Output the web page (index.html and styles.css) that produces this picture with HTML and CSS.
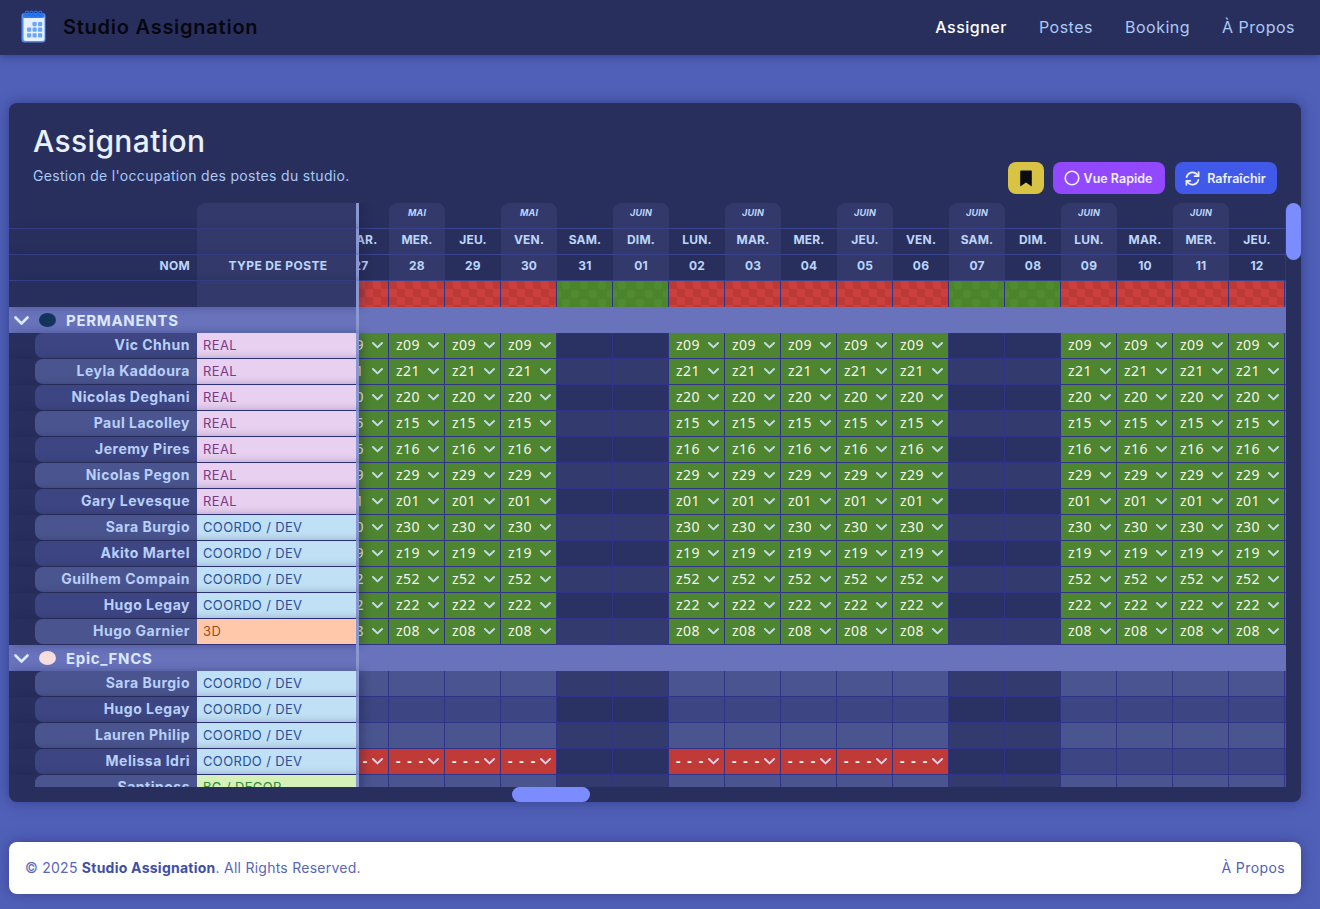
FILE: index.html
```html
<!doctype html>
<html lang="fr">
<head>
    <meta charset="UTF-8">
    <title>Studio Assignation</title>
    <link rel="stylesheet" href="styles.css">
</head>
<body>
    <nav class="topbar">
        <a class="brand" href="#">
            <svg class="brand-logo" width="28" height="34" viewBox="0 0 28 34">
                <rect x="1.5" y="3" width="24" height="29.5" rx="3" fill="#4f8ff5"/>
                <rect x="3.5" y="6" width="21" height="25" rx="2" fill="#e6f0fd"/>
                <rect x="3" y="3" width="21" height="5" rx="1.5" fill="#2f7df0"/>
                <g fill="none" stroke="#1f6fe8" stroke-width="1.4">
                    <ellipse cx="7" cy="3.5" rx="1.7" ry="2.4"/>
                    <ellipse cx="11.4" cy="3.5" rx="1.7" ry="2.4"/>
                    <ellipse cx="15.8" cy="3.5" rx="1.7" ry="2.4"/>
                    <ellipse cx="20.2" cy="3.5" rx="1.7" ry="2.4"/>
                </g>
                <g fill="#6aa6f5">
                    <rect x="12.5" y="12" width="4.2" height="4.2" rx=".8"/>
                    <rect x="18" y="12" width="4.2" height="4.2" rx=".8"/>
                    <rect x="7" y="17.6" width="4.2" height="4.2" rx=".8"/>
                    <rect x="12.5" y="17.6" width="4.2" height="4.2" rx=".8"/>
                    <rect x="18" y="17.6" width="4.2" height="4.2" rx=".8"/>
                    <rect x="7" y="23.2" width="4.2" height="4.2" rx=".8"/>
                    <rect x="12.5" y="23.2" width="4.2" height="4.2" rx=".8"/>
                    <rect x="18" y="23.2" width="4.2" height="4.2" rx=".8"/>
                </g>
            </svg>
            <span class="brand-name">Studio Assignation</span>
        </a>
        <ul class="menu">
            <li><a class="active" href="#">Assigner</a></li>
            <li><a href="#">Postes</a></li>
            <li><a href="#">Booking</a></li>
            <li><a href="#">À Propos</a></li>
        </ul>
    </nav>

    <main class="page">
        <section class="card">
            <header class="card-head">
                <div class="card-title">
                    <h1>Assignation</h1>
                    <p>Gestion de l'occupation des postes du studio.</p>
                </div>
                <div class="actions">
                    <button class="btn btn-mark" type="button">
                        <svg width="12" height="17" viewBox="0 0 12 17"><path d="M1 0.5h10a.8.8 0 0 1 .8.8V16.5L6 12.6 .2 16.5V1.3A.8.8 0 0 1 1 .5z" fill="#0b0b12"/></svg>
                    </button>
                    <button class="btn btn-quick" type="button">
                        <svg width="16" height="16" viewBox="0 0 16 16"><circle cx="8" cy="8" r="6.8" fill="none" stroke="#eef0ff" stroke-width="1.6"/></svg>
                        Vue Rapide
                    </button>
                    <button class="btn btn-refresh" type="button">
                        <svg width="15" height="15" viewBox="0 0 15 15" fill="none" stroke="#eef2ff" stroke-width="1.7" stroke-linecap="round" stroke-linejoin="round">
                            <path d="M1.6 6.2A6 6 0 0 1 11.8 3.2L13.4 5"/>
                            <path d="M13.6 1.2V5.2H9.6"/>
                            <path d="M13.4 8.8A6 6 0 0 1 3.2 11.8L1.6 10"/>
                            <path d="M1.4 13.8V9.8H5.4"/>
                        </svg>
                        Rafraîchir
                    </button>
                </div>
            </header>

            <div class="board">
                <div class="viewport" id="grid"></div>
                <div class="vtrack"><div class="vthumb"></div></div>
            </div>
            <div class="htrack"><div class="hthumb"></div></div>
        </section>
    </main>

    <footer class="footer">
        <span>© 2025 <strong>Studio Assignation</strong>. All Rights Reserved.</span>
        <a href="#">À Propos</a>
    </footer>

    <script src="script.js"></script>
</body>
</html>
```

FILE: styles.css
```css
*{
    margin: 0;
    padding: 0;
    box-sizing: border-box;
}
ul{
    list-style: none;
}
a{
    text-decoration: none;
}
html,body{
    height: 909px;
    overflow: hidden;
}
body{
    background: #5060b8;
    font-family: Inter, "Liberation Sans", sans-serif;
}
/* nav */
.topbar{
    height: 55px;
    background: #292f5c;
    display: flex;
    align-items: center;
    justify-content: space-between;
    padding: 0 25px 2px 20px;
    box-shadow: 0 2px 8px rgba(40,48,120,.6);
}
.brand{
    display: flex;
    align-items: center;
    gap: 15px;
}
.brand-name{
    color: #07070f;
    font-size: 20px;
    font-weight: 600;
    letter-spacing: .75px;
}
.menu{
    display: flex;
    gap: 32px;
}
.menu a{
    color: #a9c9f7;
    font-size: 16px;
    letter-spacing: .5px;
}
.menu .active{
    color: #fff;
    font-weight: 500;
}
/* card */
.page{
    padding: 48px 19px 40px 9px;
}
.card{
    background: #292f5c;
    border-radius: 8px;
    box-shadow: 0 0 14px rgba(40,48,120,.7);
    overflow: hidden;
}
.card-head{
    height: 100px;
    padding: 20px 24px 9px;
    display: flex;
    justify-content: space-between;
}
.card-head h1{
    color: #e8f1ff;
    font-size: 30px;
    font-weight: 500;
    line-height: 36px;
    letter-spacing: .35px;
}
.card-head p{
    color: #a9c9f7;
    font-size: 14px;
    margin-top: 7px;
    line-height: 20px;
    letter-spacing: .32px;
}
.actions{
    display: flex;
    gap: 9px;
    align-self: flex-end;
}
.btn{
    height: 32px;
    border: 0;
    border-radius: 8px;
    color: #eef2ff;
    font-family: inherit;
    font-size: 12.5px;
    font-weight: 600;
    display: flex;
    align-items: center;
    justify-content: center;
}
.btn-mark{
    width: 36px;
    background: #d8c344;
}
.btn-quick{
    width: 112px;
    gap: 4px;
    padding-right: 2px;
    background: #9148ff;
}
.btn-refresh{
    width: 102px;
    gap: 7px;
    margin-left: 1px;
    padding-right: 1px;
    background: #4159e8;
}
/* grille */
.board{
    display: flex;
}
.viewport{
    width: 1277px;
    height: 584px;
    overflow: hidden;
}
.vtrack{
    width: 15px;
}
.vthumb{
    height: 57px;
    background: #7b8cff;
    border-radius: 8px;
}
.htrack{
    height: 15px;
    padding-left: 503px;
}
.hthumb{
    width: 78px;
    height: 15px;
    background: #7b8cff;
    border-radius: 8px;
}
.row{
    display: flex;
    height: 26px;
    width: 1277px;
}
.fixed{
    flex: 0 0 350px;
    display: flex;
    border-right: 3px solid #8a96d2;
    box-shadow: 4px 0 8px rgba(25,28,70,.35);
    position: relative;
    z-index: 1;
}
.days{
    flex: 1;
    display: flex;
    overflow: hidden;
}
.day{
    flex: 0 0 56px;
    height: 26px;
    border-right: 1px solid #2f3488;
    border-bottom: 1px solid #2f3488;
    display: flex;
    align-items: center;
    justify-content: space-between;
    padding: 0 5px 0 7px;
}
.day:first-child{
    margin-left: -26px;
}
/* entete */
.head .fixed{
    background: #292f5c;
}
.head-name{
    flex: 0 0 188px;
    padding-right: 7px;
    color: #bcd6fb;
    font-size: 12px;
    font-weight: 700;
    line-height: 21px;
    letter-spacing: .3px;
    text-align: right;
    border-bottom: 1px solid #3a4390;
}
.head-type{
    flex: 0 0 159px;
    padding-left: 3px;
    background: #333a6b;
    color: #bcd6fb;
    font-size: 12px;
    font-weight: 700;
    line-height: 21px;
    letter-spacing: .4px;
    text-align: center;
    border-bottom: 1px solid #3a4390;
}
.head:first-child .head-type{
    border-radius: 8px 0 0 0;
}
.head .day{
    border-right: 0;
    border-bottom: 1px solid #3a4390;
    justify-content: center;
    padding: 0 0 4px;
    color: #bcd6fb;
    font-weight: 700;
    font-size: 12px;
    letter-spacing: .2px;
}
.head .month{
    font-size: 9px;
    font-style: italic;
    padding-bottom: 6px;
}
.head .alt{
    background: #333a6b;
}
.head .month.alt{
    border-radius: 8px 8px 0 0;
}
.status .head-name,.status .head-type{
    border-bottom: 0;
}
.head.status .day{
    border-right: 1px solid #2f3488;
    border-bottom: 0;
    padding: 0;
}
.off{
    background: #c13c39 repeating-conic-gradient(#cb403d 0 25%, #bb3a38 0 50%) 0 0/16px 16px;
}
.on{
    background-color: #4c842c;
    background-image: radial-gradient(circle 4.5px, #508b32 90%, transparent), radial-gradient(circle 4.5px, #508b32 90%, transparent);
    background-size: 18px 18px;
    background-position: 0 -5px, 9px 4px;
}
/* groupes */
.group{
    background: #6873bc;
}
.group .fixed{
    box-shadow: none;
    align-items: center;
    gap: 10px;
    padding-left: 5px;
    border-right-color: #8c98d4;
    color: #dce9ff;
    font-size: 15px;
    font-weight: 700;
    letter-spacing: .7px;
}
.dot{
    width: 17px;
    height: 14px;
    border-radius: 50%;
}
.dot-dark{
    background: #15345c;
}
.dot-pink{
    background: #f5dedd;
}
/* lignes */
.person{
    background: #292f5c;
}
.person .fixed{
    background: #292f5c;
}
.name{
    flex: 0 0 162px;
    margin-left: 26px;
    padding-right: 7px;
    height: 25px;
    background: #3d4682;
    border-radius: 8px 0 0 8px;
    color: #b8d0fa;
    font-size: 14px;
    font-weight: 700;
    line-height: 24px;
    letter-spacing: .5px;
    text-align: right;
    white-space: nowrap;
}
.type{
    flex: 0 0 159px;
    border-bottom: 1px solid #2f3488;
    padding-left: 6px;
    font-size: 13px;
    line-height: 25px;
    letter-spacing: .35px;
}
.type-real{
    background: #e8d0f0;
    color: #7b3a85;
}
.type-dev{
    background: #c0e0f5;
    color: #2a4f9a;
}
.type-3d{
    background: #ffc8aa;
    color: #a04a10;
}
.type-bg{
    background: #d5f0b8;
    color: #2f8a3a;
}
.person .day{
    background: #3d4682;
}
.person .day.we{
    background: #2a3163;
}
.person:nth-child(odd) .name{
    background: #4a558f;
}
.person:nth-child(odd) .day{
    background: #4a558f;
}
.person:nth-child(odd) .day.we{
    background: #333a6e;
}
.person .day.set{
    background: #4e8530;
}
.person .day.none{
    background: #c03a37;
}
.val{
    color: #f6f6ea;
    font-family: "Noto Sans", sans-serif;
    font-size: 14px;
    line-height: 22px;
    margin-bottom: 2px;
    letter-spacing: .4px;
}
.none .val{
    font-weight: 700;
    letter-spacing: 1.6px;
}
.chev{
    flex: none;
}
/* footer */
.footer{
    margin: 0 19px 0 9px;
    height: 52px;
    padding: 0 16px 2px;
    background: #fff;
    border-radius: 8px;
    box-shadow: 0 0 14px rgba(40,48,120,.6);
    display: flex;
    align-items: center;
    justify-content: space-between;
    color: #5a66b8;
    font-size: 14px;
    letter-spacing: .25px;
}
.footer strong{
    color: #3f4fa8;
    font-weight: 700;
}
.footer a{
    color: #4f62b8;
    letter-spacing: .4px;
}
```

FILE: script.js
```js
window.onload = function() {
    var oGrid = document.getElementById('grid');
    // la derniere colonne ne depasse que d'un pixel : pas de texte dedans
    var names = ['MAR.','MER.','JEU.','VEN.','SAM.','DIM.','LUN.','MAR.','MER.','JEU.','VEN.','SAM.','DIM.','LUN.','MAR.','MER.','JEU.',''];
    var nums = ['27','28','29','30','31','01','02','03','04','05','06','07','08','09','10','11','12',''];
    var months = ['','MAI','','MAI','','JUIN','','JUIN','','JUIN','','JUIN','','JUIN','','JUIN','',''];
    var chev = '<svg class="chev" width="11" height="7" viewBox="0 0 11 7"><path d="M1 1l4.5 4.4L10 1" fill="none" stroke="#c9d8f2" stroke-width="1.9" stroke-linecap="round" stroke-linejoin="round"/></svg>';
    var last = nums.length - 1;

    var groups = [
        {title: 'PERMANENTS', dot: 'dot-dark', people: [
            ['Vic Chhun', 'real', 'z09'],
            ['Leyla Kaddoura', 'real', 'z21'],
            ['Nicolas Deghani', 'real', 'z20'],
            ['Paul Lacolley', 'real', 'z15'],
            ['Jeremy Pires', 'real', 'z16'],
            ['Nicolas Pegon', 'real', 'z29'],
            ['Gary Levesque', 'real', 'z01'],
            ['Sara Burgio', 'dev', 'z30'],
            ['Akito Martel', 'dev', 'z19'],
            ['Guilhem Compain', 'dev', 'z52'],
            ['Hugo Legay', 'dev', 'z22'],
            ['Hugo Garnier', '3d', 'z08']
        ]},
        {title: 'Epic_FNCS', dot: 'dot-pink', people: [
            ['Sara Burgio', 'dev', ''],
            ['Hugo Legay', 'dev', ''],
            ['Lauren Philip', 'dev', ''],
            ['Melissa Idri', 'dev', '- - -', 11],
            ['Santinoss', 'bg', '']
        ]}
    ];
    var types = {real: 'REAL', dev: 'COORDO / DEV', '3d': '3D', bg: 'BG / DECOR'};

    function isWeekend(i) {
        return names[i] == 'SAM.' || names[i] == 'DIM.';
    }

    function headRow(nameLabel, typeLabel, list, cls) {
        var html = '<div class="row head"><div class="fixed">';
        html += '<div class="head-name">' + nameLabel + '</div><div class="head-type">' + typeLabel + '</div></div><div class="days">';
        for (var i = 0; i < list.length; i++) {
            html += '<div class="day ' + cls + (i % 2 == 1 ? ' alt' : '') + '">' + list[i] + '</div>';
        }
        return html + '</div></div>';
    }

    var html = headRow('', '', months, 'month');
    html += headRow('', '', names, 'dayname');
    html += headRow('NOM', 'TYPE DE POSTE', nums, 'num');

    html += '<div class="row head status"><div class="fixed"><div class="head-name"></div><div class="head-type"></div></div><div class="days">';
    for (var i = 0; i < nums.length; i++) {
        html += '<div class="day ' + (isWeekend(i) ? 'on' : 'off') + '"></div>';
    }
    html += '</div></div>';

    var body = '';
    for (var g = 0; g < groups.length; g++) {
        body += '<div class="row group"><div class="fixed">';
        body += '<svg width="15" height="9" viewBox="0 0 15 9"><path d="M1.5 1.5l6 6 6-6" fill="none" stroke="#dce9ff" stroke-width="2.6" stroke-linecap="round" stroke-linejoin="round"/></svg>';
        body += '<span class="dot ' + groups[g].dot + '"></span><span>' + groups[g].title + '</span></div></div>';
        var people = groups[g].people;
        for (var p = 0; p < people.length; p++) {
            var val = people[p][2];
            var until = people[p][3] || nums.length;
            body += '<div class="row person"><div class="fixed">';
            body += '<div class="name">' + people[p][0] + '</div>';
            body += '<div class="type type-' + people[p][1] + '">' + types[people[p][1]] + '</div></div><div class="days">';
            for (var d = 0; d < nums.length; d++) {
                if (isWeekend(d)) {
                    body += '<div class="day we"></div>';
                } else if (val == '' || d >= until) {
                    body += '<div class="day"></div>';
                } else if (d == last) {
                    body += '<div class="day set"></div>';
                } else {
                    body += '<div class="day ' + (val.charAt(0) == 'z' ? 'set' : 'none') + '"><span class="val">' + val + '</span>' + chev + '</div>';
                }
            }
            body += '</div></div>';
        }
    }
    oGrid.innerHTML = html + '<div class="rows">' + body + '</div>';
};
```
